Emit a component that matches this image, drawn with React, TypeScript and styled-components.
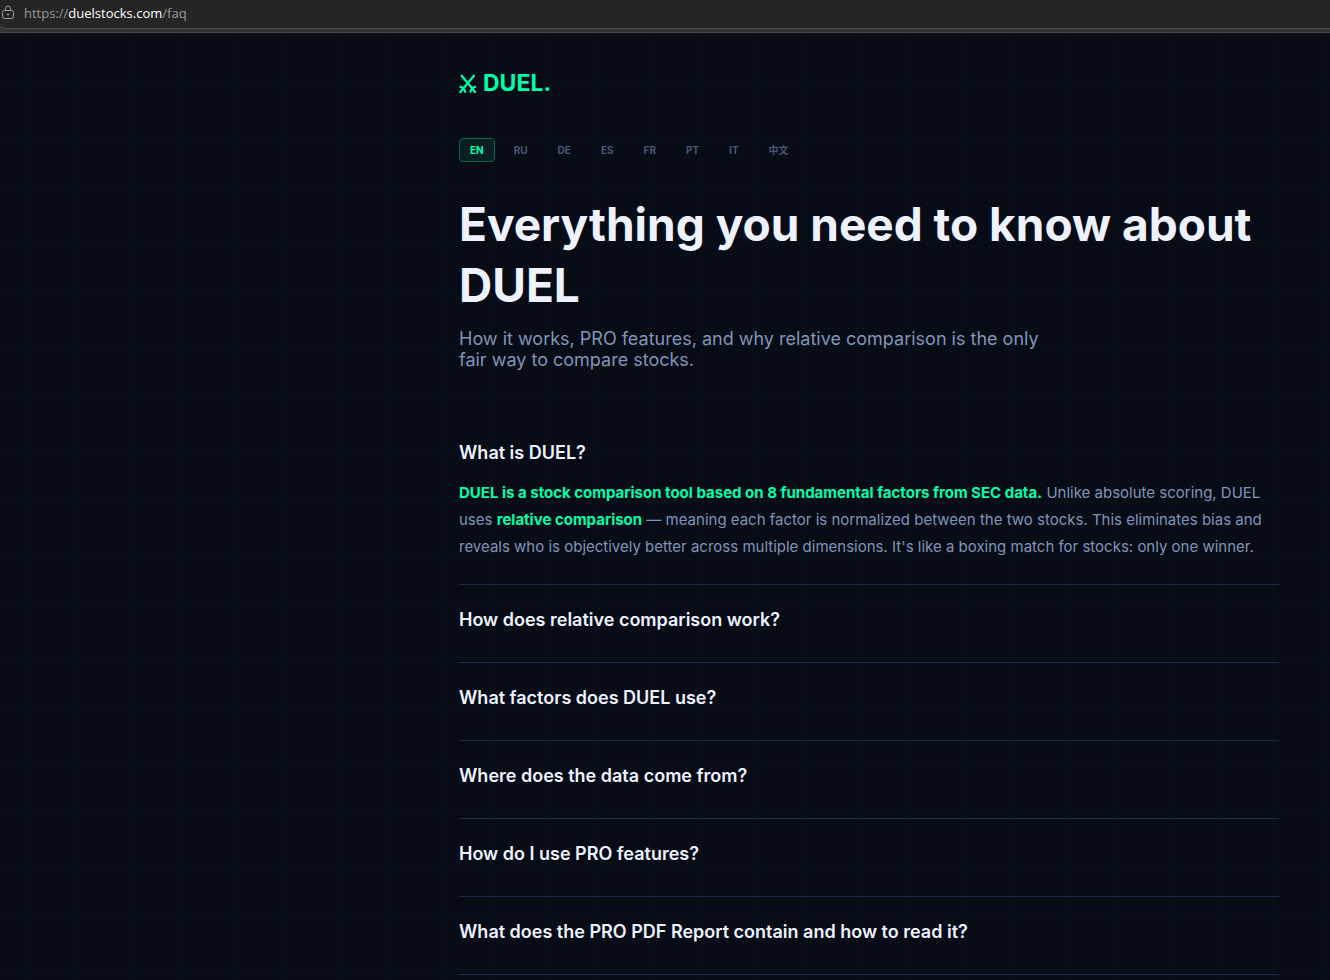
import React, { useState } from "react";
import styled, { createGlobalStyle } from "styled-components";

const GlobalStyle = createGlobalStyle`
  *, *::before, *::after { box-sizing: border-box; }
  body {
    margin: 0;
    background: #070c17;
    color: #eef2ff;
    font-family: Inter, "Noto Sans CJK SC", sans-serif;
  }
`;

const AddressFrame = styled.header`
  background: #343434;
  border-bottom: 1px solid #454545;
  padding-bottom: 3px;
`;

const AddressBar = styled.div`
  display: flex;
  align-items: center;
  gap: 9px;
  height: 29px;
  padding-bottom: 2px;
  background: #252525;
  border-bottom: 1px solid #505050;
  border-bottom-left-radius: 6px;
`;

const Url = styled.a`
  color: #9a9a9a;
  font: 13px/18px "Open Sans", sans-serif;
  text-decoration: none;
`;

const Host = styled.span`
  color: #ffffff;
`;

const Page = styled.div`
  min-height: calc(100vh - 33px);
  padding: 36px 51px 0 24px;
  background-color: #070c17;
  background-image:
    linear-gradient(rgba(0, 255, 170, 0.02) 1px, transparent 1px),
    linear-gradient(90deg, rgba(0, 255, 170, 0.02) 1px, transparent 1px);
  background-size: 52px 52px;
  background-position: 24px 0;
`;

const Column = styled.main`
  max-width: 820px;
  margin-left: auto;
`;

const Logo = styled.a`
  display: flex;
  align-items: center;
  gap: 6px;
  width: fit-content;
  color: #00ffaa;
  font-size: 23px;
  font-weight: 700;
  line-height: 29px;
  text-decoration: none;
`;

const Languages = styled.nav`
  display: flex;
  flex-wrap: wrap;
  gap: 8px;
  margin-top: 40px;
`;

const LanguageButton = styled.button<{ $active?: boolean }>`
  height: 24px;
  padding: 0 10px;
  border: 1px solid ${(p) => (p.$active ? "#04694f" : "transparent")};
  border-radius: 4px;
  background: ${(p) => (p.$active ? "#071e22" : "transparent")};
  color: ${(p) => (p.$active ? "#00ffaa" : "#475878")};
  font: 700 10px/14px Inter, "Noto Sans CJK SC", sans-serif;
  cursor: pointer;
`;

const Title = styled.h1`
  margin: 32px 0 0;
  font-size: 46px;
  font-weight: 700;
  line-height: 61px;
`;

const Lead = styled.p`
  max-width: 600px;
  margin: 12px 0 0;
  color: #8294b8;
  font-size: 18px;
  line-height: 21px;
`;

const FaqList = styled.div`
  margin-top: 48px;
`;

const FaqItem = styled.section`
  padding: 24px 0;
  border-bottom: 1px solid #1c2c48;
`;

const Question = styled.h2`
  margin: 0 0 8px;
  font-size: 18px;
  line-height: 21px;
`;

const QuestionButton = styled.button`
  display: block;
  width: 100%;
  padding: 0;
  border: 0;
  background: none;
  color: #eef2ff;
  font: 600 18px/21px Inter, sans-serif;
  text-align: left;
  cursor: pointer;
`;

const Answer = styled.p`
  margin: 16px 0 0;
  color: #8294b8;
  font-size: 15px;
  line-height: 27px;

  strong {
    color: #00ffaa;
    font-weight: 700;
  }
`;

const LockIcon = () => (
  <svg width="15" height="16" viewBox="0 0 15 16" fill="none" stroke="#a0a0a0" aria-hidden="true">
    <rect x="2.5" y="5.5" width="11" height="8" rx="2" />
    <path d="M5.5 5.500V3.500a2.500 2.500 0 0 1 5 0v2" />
    <circle cx="8" cy="9.500" r="0.6" fill="#a0a0a0" />
  </svg>
);

const SwordsIcon = () => (
  <svg width="18" height="20" viewBox="0 0 18 20" fill="none" stroke="currentColor" strokeWidth="2.2" aria-hidden="true">
    <path d="M2 1 16.800 18.800M15.500 1 0.700 18.800" />
    <path d="M0.600 12.400 3 13.400 5.600 16.400 6.400 18.600M16.900 12.400 14.500 13.400 11.900 16.400 11.100 18.600" />
  </svg>
);

const languages = ["EN", "RU", "DE", "ES", "FR", "PT", "IT", "中文"];

const questions: { title: string; answer?: React.ReactNode }[] = [
  {
    title: "What is DUEL?",
    answer: (
      <>
        <strong>DUEL is a stock comparison tool based on 8 fundamental factors from SEC data.</strong> Unlike
        absolute scoring, DUEL uses <strong>relative comparison</strong> — meaning each factor is normalized
        between the two stocks. This eliminates bias and reveals who is objectively better across multiple
        dimensions. It's like a boxing match for stocks: only one winner.
      </>
    ),
  },
  { title: "How does relative comparison work?" },
  { title: "What factors does DUEL use?" },
  { title: "Where does the data come from?" },
  { title: "How do I use PRO features?" },
  { title: "What does the PRO PDF Report contain and how to read it?" },
];

export default function App() {
  const [language, setLanguage] = useState("EN");
  const [open, setOpen] = useState(0);

  return (
    <>
      <GlobalStyle />
      <AddressFrame>
        <AddressBar>
          <LockIcon />
          <Url href="https://duelstocks.com/faq">
            https://<Host>duelstocks.com</Host>/faq
          </Url>
        </AddressBar>
      </AddressFrame>
      <Page>
        <Column>
          <Logo href="/">
            <SwordsIcon />
            DUEL.
          </Logo>
          <Languages aria-label="Language">
            {languages.map((name) => (
              <LanguageButton
                key={name}
                type="button"
                $active={name === language}
                aria-pressed={name === language}
                onClick={() => setLanguage(name)}
              >
                {name}
              </LanguageButton>
            ))}
          </Languages>
          <Title>Everything you need to know about DUEL</Title>
          <Lead>
            How it works, PRO features, and why relative comparison is the only fair way to compare stocks.
          </Lead>
          <FaqList>
            {questions.map((item, index) => (
              <FaqItem key={item.title}>
                <Question>
                  <QuestionButton
                    type="button"
                    aria-expanded={open === index}
                    onClick={() => setOpen(open === index ? -1 : index)}
                  >
                    {item.title}
                  </QuestionButton>
                </Question>
                {open === index && item.answer && <Answer>{item.answer}</Answer>}
              </FaqItem>
            ))}
          </FaqList>
        </Column>
      </Page>
    </>
  );
}
